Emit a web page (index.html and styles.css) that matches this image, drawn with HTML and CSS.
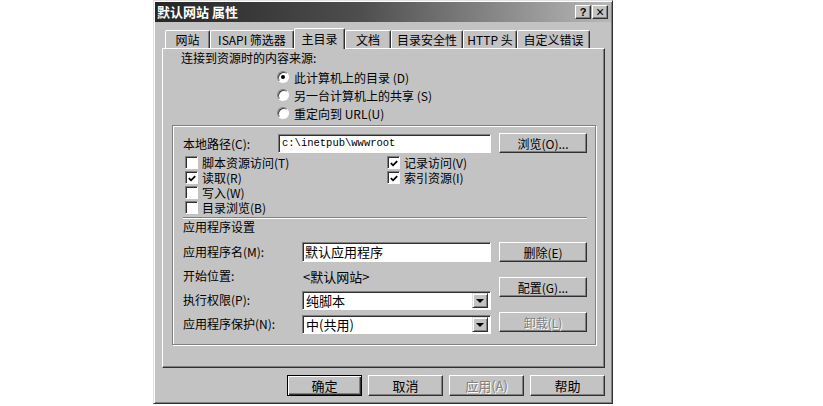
FILE: index.html
```html
<!DOCTYPE html>
<html lang="zh-CN">
<head>
  <meta charset="UTF-8" />
  <title>默认网站 属性</title>
  <link rel="stylesheet" href="styles.css">
</head>
<body>
  <div class="dialog">
    <div class="titlebar">
      <span class="title">默认网站 属性</span>
      <div class="title-buttons">
        <span class="tbtn">?</span>
        <span class="tbtn close">×</span>
      </div>
    </div>

    <div class="dialog-body">
      <!-- Tab strip -->
      <div class="tabs">
        <div class="tab t-site">网站</div>
        <div class="tab t-isapi">ISAPI 筛选器</div>
        <div class="tab t-home active">主目录</div>
        <div class="tab t-docs">文档</div>
        <div class="tab t-sec">目录安全性</div>
        <div class="tab t-http">HTTP 头</div>
        <div class="tab t-err">自定义错误</div>
      </div>

      <div class="panel">
        <div class="source-title">连接到资源时的内容来源:</div>
        <div class="radios">
          <div class="radio-row"><span class="radio checked"></span>此计算机上的目录 (D)</div>
          <div class="radio-row"><span class="radio"></span>另一台计算机上的共享 (S)</div>
          <div class="radio-row"><span class="radio"></span>重定向到 URL(U)</div>
        </div>

        <div class="group">
          <div class="path-row">
            <span class="path-label">本地路径(C):</span>
            <div class="field path-field">c:\inetpub\wwwroot</div>
            <span class="btn">浏览(O)...</span>
          </div>

          <div class="checks">
            <div class="check-row"><span class="checkbox"></span>脚本资源访问(T)</div>
            <div class="check-row"><span class="checkbox checked"><svg viewBox="0 0 11 11"><path d="M2 5 L4.5 7.5 L9 3" /></svg></span>记录访问(V)</div>
            <div class="check-row"><span class="checkbox checked"><svg viewBox="0 0 11 11"><path d="M2 5 L4.5 7.5 L9 3" /></svg></span>读取(R)</div>
            <div class="check-row"><span class="checkbox checked"><svg viewBox="0 0 11 11"><path d="M2 5 L4.5 7.5 L9 3" /></svg></span>索引资源(I)</div>
            <div class="check-row"><span class="checkbox"></span>写入(W)</div>
            <div class="check-row"></div>
            <div class="check-row"><span class="checkbox"></span>目录浏览(B)</div>
          </div>

          <div class="separator"></div>
          <div class="app-title">应用程序设置</div>

          <div class="app">
            <div class="app-fields">
              <span class="app-label">应用程序名(M):</span>
              <div class="field app-name">默认应用程序</div>

              <span class="app-label">开始位置:</span>
              <span class="app-value">&lt;默认网站&gt;</span>

              <span class="app-label">执行权限(P):</span>
              <div class="field select">纯脚本<span class="drop"></span></div>

              <span class="app-label">应用程序保护(N):</span>
              <div class="field select">中(共用)<span class="drop"></span></div>
            </div>
            <div class="app-buttons">
              <span class="btn">删除(E)</span>
              <span class="btn">配置(G)...</span>
              <span class="btn disabled">卸载(L)</span>
            </div>
          </div>
        </div>
      </div>

      <div class="footer">
        <span class="btn big default">确定</span>
        <span class="btn big">取消</span>
        <span class="btn big disabled">应用(A)</span>
        <span class="btn big">帮助</span>
      </div>
    </div>
  </div>
</body>
</html>
```

FILE: styles.css
```css
*, *::before, *::after {
  box-sizing: border-box;
}

html, body {
  margin: 0;
  padding: 0;
  background: #ffffff;
}

body {
  font-family: "Noto Sans CJK SC", sans-serif;
  font-size: 12px;
  line-height: 15px;
  color: #000000;
}

/* Dialog frame */
.dialog {
  width: 460px;
  height: 404px;
  margin-left: 153px;
  padding: 1px;
  background: #c3c3c3;
  border: 1px solid;
  border-color: #e2e2e2 #303030 #303030 #e2e2e2;
  box-shadow: inset 1px 1px #ffffff, inset -1px -1px #808080;
}

.titlebar {
  height: 20px;
  display: flex;
  align-items: center;
  justify-content: space-between;
  padding: 0 3px 0 2px;
  background: linear-gradient(to right, #262626, #4e4e4e 45%, #b8b8b8);
}

.title {
  color: #ffffff;
  font-weight: bold;
  font-size: 13px;
  line-height: 20px;
}

.title-buttons {
  display: flex;
  gap: 1px;
}

.tbtn {
  width: 16px;
  height: 14px;
  display: flex;
  align-items: center;
  justify-content: center;
  background: #c3c3c3;
  border: 1px solid;
  border-color: #ffffff #303030 #303030 #ffffff;
  box-shadow: inset -1px -1px #808080;
  font-family: "Liberation Sans", sans-serif;
  font-weight: bold;
  font-size: 11px;
  line-height: 12px;
}

.tbtn.close {
  font-size: 14px;
  font-weight: normal;
}

.dialog-body {
  padding: 6px 6px 0 7px;
}

/* Tabs */
.tabs {
  display: flex;
  align-items: flex-end;
  height: 20px;
  padding-left: 3px;
}

.tab {
  height: 18px;
  line-height: 17px;
  text-align: center;
  white-space: nowrap;
  border-top: 1px solid #ffffff;
  border-left: 1px solid #ffffff;
  border-right: 1px solid #303030;
  border-radius: 2px 2px 0 0;
  box-shadow: inset -1px 0 #808080;
}

.tab.active {
  height: 21px;
  margin-bottom: -1px;
  position: relative;
  z-index: 1;
  background: #c3c3c3;
  line-height: 19px;
}

.t-site { width: 45px; }
.t-isapi { width: 84px; }
.t-home { width: 51px; }
.t-docs { width: 46px; }
.t-sec { width: 72px; }
.t-http { width: 54px; }
.t-err { width: 73px; }

/* Tab panel */
.panel {
  height: 320px;
  border: 1px solid;
  border-color: #ffffff #303030 #303030 #ffffff;
  box-shadow: inset -1px -1px #808080;
}

.source-title {
  margin-top: 1px;
  padding-left: 18px;
  line-height: 16px;
}

.radios {
  margin-top: 2px;
  padding-left: 114px;
}

.radio-row {
  height: 18px;
  line-height: 15px;
  display: flex;
  align-items: center;
}

.radio {
  width: 12px;
  height: 12px;
  margin-right: 5px;
  border-radius: 50%;
  background: #ffffff;
  border: 1px solid;
  border-color: #808080 #ffffff #ffffff #808080;
  box-shadow: inset 1px 1px #404040;
  display: flex;
  align-items: center;
  justify-content: center;
}

.radio.checked::after {
  content: "";
  width: 4px;
  height: 4px;
  border-radius: 50%;
  background: #000000;
}

/* Inner etched frame */
.group {
  margin: 3px 8px 0 9px;
  padding: 7px 7px 10px 10px;
  border: 1px solid #808080;
  box-shadow: inset 1px 1px #ffffff, 1px 1px #ffffff;
}

.path-row {
  display: flex;
  align-items: center;
  height: 20px;
}

.path-label {
  width: 95px;
}

.field {
  background: #ffffff;
  border: 1px solid;
  border-color: #808080 #ffffff #ffffff #808080;
  box-shadow: inset 1px 1px #303030;
  white-space: nowrap;
}

.path-field {
  width: 213px;
  height: 19px;
  margin-right: 8px;
  padding-left: 3px;
  font-family: "Liberation Mono", monospace;
  font-size: 10.5px;
  line-height: 17px;
}

/* Buttons */
.btn {
  width: 88px;
  height: 20px;
  display: flex;
  align-items: center;
  justify-content: center;
  background: #c3c3c3;
  border: 1px solid;
  border-color: #ffffff #303030 #303030 #ffffff;
  box-shadow: inset -1px -1px #808080;
  white-space: nowrap;
}

.btn.disabled {
  color: #808080;
  text-shadow: 1px 1px #ffffff;
}

.btn.big {
  width: 75px;
  height: 21px;
  font-size: 13px;
}

.btn.default {
  border: 1px solid #000000;
  box-shadow: inset 1px 1px #ffffff, inset -1px -1px #303030, inset -2px -2px #808080;
}

/* Checkboxes */
.checks {
  margin-top: 2px;
  display: grid;
  grid-template-columns: 202px auto;
  grid-auto-rows: 15px;
}

.check-row {
  display: flex;
  align-items: center;
  line-height: 15px;
  overflow: hidden;
}

.checkbox {
  flex: none;
  width: 13px;
  height: 13px;
  margin: 0 4px 0 2px;
  background: #ffffff;
  border: 1px solid;
  border-color: #808080 #ffffff #ffffff #808080;
  box-shadow: inset 1px 1px #303030;
  display: flex;
  align-items: center;
  justify-content: center;
}

.checkbox svg {
  width: 11px;
  height: 11px;
  margin: 1px 0 0 1px;
}

.checkbox path {
  fill: none;
  stroke: #000000;
  stroke-width: 2;
}

.separator {
  margin-top: 2px;
  margin-right: 1px;
  height: 2px;
  border-top: 1px solid #808080;
  border-bottom: 1px solid #ffffff;
}

.app-title {
  line-height: 16px;
}

.app {
  margin-top: 7px;
  display: flex;
  gap: 8px;
}

.app-fields {
  display: grid;
  grid-template-columns: 119px 189px;
  grid-auto-rows: 20px;
  row-gap: 4px;
  align-items: center;
}

.app-label {
  line-height: 20px;
}

.app-value {
  padding-left: 1px;
  font-size: 13px;
}

.app-name {
  height: 20px;
  padding-left: 2px;
  font-size: 13px;
  line-height: 18px;
}

.select {
  height: 19px;
  padding: 0 2px 0 3px;
  font-size: 13px;
  line-height: 17px;
  display: flex;
  align-items: center;
  justify-content: space-between;
}

.drop {
  width: 16px;
  height: 15px;
  background: #c3c3c3;
  border: 1px solid;
  border-color: #e2e2e2 #303030 #303030 #e2e2e2;
  box-shadow: inset 1px 1px #ffffff, inset -1px -1px #808080;
  display: flex;
  align-items: center;
  justify-content: center;
}

.drop::after {
  content: "";
  border-left: 4px solid transparent;
  border-right: 4px solid transparent;
  border-top: 4px solid #000000;
  margin-top: 1px;
}

.app-buttons {
  display: flex;
  flex-direction: column;
  gap: 15px;
}

/* Bottom button row */
.footer {
  margin-top: 7px;
  display: flex;
  justify-content: flex-end;
  gap: 6px;
}
```
